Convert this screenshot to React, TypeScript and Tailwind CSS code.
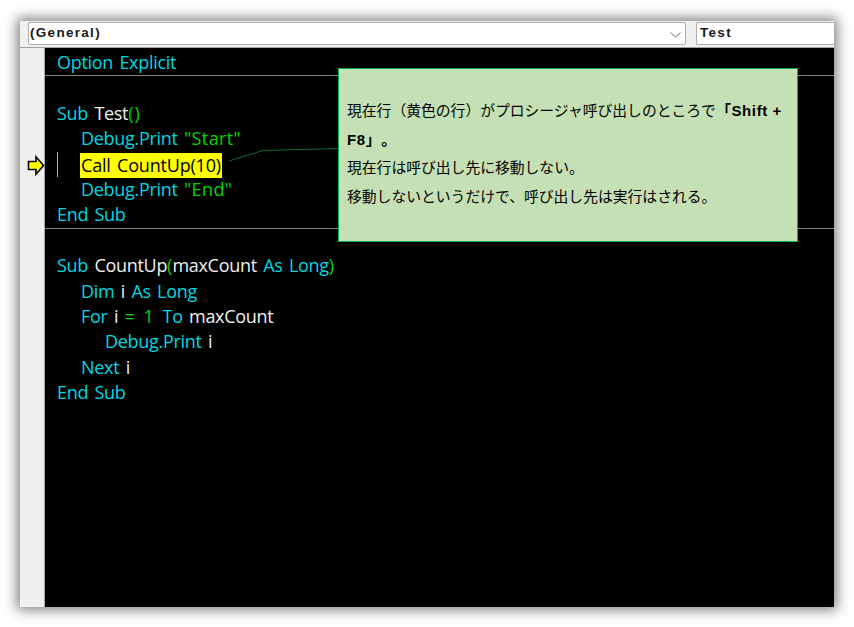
import React from "react";

const C = ({ children }: { children: React.ReactNode }) => <span className="text-[#00d6e2]">{children}</span>;
const G = ({ children }: { children: React.ReactNode }) => <span className="text-[#00d400] tracking-[1px]">{children}</span>;
const S = ({ children }: { children: React.ReactNode }) => <span className="text-[#00d400] tracking-[0.4px]">{children}</span>;
const P = ({ children }: { children: React.ReactNode }) => <span className="text-[#00d400] tracking-[1px]">{children}</span>;
const W = ({ children }: { children: React.ReactNode }) => <span className="text-[#f0f0f0]">{children}</span>;

function Row({ children, indent = 0, sep = false }: { children?: React.ReactNode; indent?: 0 | 1 | 2; sep?: boolean }) {
  const pad = indent === 0 ? "pl-[12px]" : indent === 1 ? "pl-[36px]" : "pl-[60px]";
  return (
    <div className={`h-[25.4px] box-border whitespace-pre leading-[23px] ${pad} ${sep ? "border-b border-[#808080]" : ""}`}>
      {children}
    </div>
  );
}

function Chevron() {
  return (
    <svg width="11" height="6" viewBox="0 0 11 6" className="absolute right-[4px] top-[9px]">
      <path d="M0.5 0.5 L5.5 5 L10.5 0.5" fill="none" stroke="#6f6f6f" strokeWidth="1" />
    </svg>
  );
}

export default function App() {
  return (
    <div className="w-[854px] h-[627px] bg-white pt-[21px] pl-[20px] overflow-hidden">
      <div className="relative w-[814px] h-[586px] flex flex-col bg-[#f0f0f0] shadow-[0_0_12px_3px_rgba(0,0,0,0.5)] font-['Open_Sans','Noto_Sans_CJK_JP',sans-serif]">
        <div className="h-[27px] shrink-0 flex pl-[8px] pt-[1px] gap-[10px] border-b border-[#a0a0a0] font-['Liberation_Sans',sans-serif] font-bold text-[13.5px] tracking-[1.3px] text-[#1a1a1a]">
          <div className="relative w-[658px] h-[23px] bg-white border border-[#adadad] rounded-[2px] pl-[1px] leading-[20px]">
            (General)
            <Chevron />
          </div>
          <div className="flex-1 h-[23px] bg-white border border-[#adadad] border-r-0 rounded-l-[2px] pl-[3px] leading-[20px]">
            Test
          </div>
        </div>
        <div className="flex-1 flex">
          <div className="relative w-[25px] shrink-0 bg-[#f0f0f0] border-r border-[#a8a8a8]">
            <svg width="18" height="21" viewBox="0 0 18 21" className="absolute left-[7px] top-[107px]">
              <path d="M1.5 6.5 H9 V1.8 L16.5 10.5 L9 19.2 V14.5 H1.5 Z" fill="#ffff00" stroke="#000" strokeWidth="1.6" />
            </svg>
          </div>
          <div className="relative flex-1 bg-black pt-[3px] text-[18px] font-normal tracking-[-0.3px] [word-spacing:2px]">
            <Row sep><C>Option Explicit</C></Row>
            <Row />
            <Row><C>Sub </C><W>Test</W><P>()</P></Row>
            <Row indent={1}><C>Debug.Print </C><S>"Start"</S></Row>
            <Row indent={1}>
              <span className="absolute left-[12px] top-[104px] w-px h-[25px] bg-[#b0b0b0]" />
              <span className="inline-block align-top h-[25px] leading-[24px] bg-[#ffff00] text-black pl-px pr-px -ml-px tracking-[-0.2px]">Call CountUp(10)</span>
            </Row>
            <Row indent={1}><C>Debug.Print </C><S>"End"</S></Row>
            <Row sep><C>End Sub</C></Row>
            <Row />
            <Row><C>Sub </C><W>CountUp</W><span className="text-[#00d400] tracking-[0px]">(</span><W>maxCount </W><C>As Long</C><P>)</P></Row>
            <Row indent={1}><C>Dim </C><W>i </W><C>As Long</C></Row>
            <Row indent={1}><C>For </C><W>i </W><G>= 1 </G><C>To </C><W>maxCount</W></Row>
            <Row indent={2}><C>Debug.Print </C><W>i</W></Row>
            <Row indent={1}><C>Next </C><W>i</W></Row>
            <Row><C>End Sub</C></Row>
          </div>
        </div>
        <svg width="120" height="20" viewBox="0 0 120 20" className="absolute left-[208px] top-[125px]">
          <path d="M1 15 L35 4.5 L110 2.5" fill="none" stroke="#0b6a30" strokeWidth="1" />
        </svg>
        <div className="absolute left-[318px] top-[47px] w-[460px] h-[174px] box-border bg-[#c5e0b4] border border-[#00b050] pl-[8px] pr-[8px] pt-[27px] text-[14.8px] leading-[28.7px] text-black [text-spacing-trim:space-all]">
          <p>現在行（黄色の行）がプロシージャ呼び出しのところで<b className="font-['Liberation_Sans','Noto_Sans_CJK_JP',sans-serif] text-[15px] tracking-[0.6px] leading-[18px]">「Shift + F8」。</b></p>
          <p>現在行は呼び出し先に移動しない。</p>
          <p>移動しないというだけで、呼び出し先は実行はされる。</p>
        </div>
      </div>
    </div>
  );
}
